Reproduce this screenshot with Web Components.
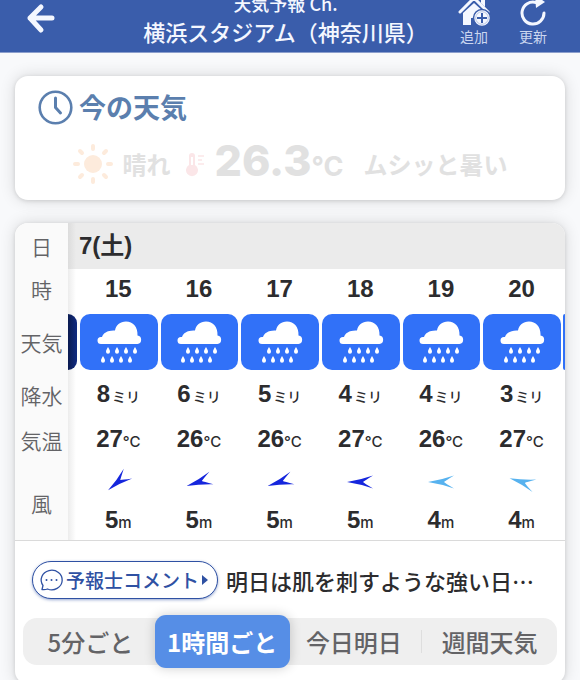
<!DOCTYPE html>
<html lang="ja">
<head>
<meta charset="utf-8">
<meta name="viewport" content="width=device-width, initial-scale=1">
<title>天気予報 Ch.</title>
<style>
    html {
        scrollbar-width: none;
    }

    body {
        margin: 0;
        background: #f8f9fb;
        color: #2c2c2e;
        font-family: "Noto Sans CJK JP", sans-serif;
        --number-font: "Liberation Sans", "Noto Sans CJK JP", sans-serif;
        --brand: #3a5dab;
    }

    main {
        display: flex;
        flex-direction: column;
        gap: 23px;
        padding: 23px 15px 16px;
    }
</style>
</head>
<body>
<app-header></app-header>
<main>
    <weather-card><now-weather></now-weather></weather-card>
    <weather-card>
        <hourly-forecast></hourly-forecast>
        <forecaster-comment>明日は肌を刺すような強い日…</forecaster-comment>
        <period-tabs></period-tabs>
    </weather-card>
</main>

<script>
const HOURS = [
    { hour: 15, rain: 8, temp: 27, wind: 5, angle: -40 },
    { hour: 16, rain: 6, temp: 26, wind: 5, angle: -18 },
    { hour: 17, rain: 5, temp: 26, wind: 5, angle: -18 },
    { hour: 18, rain: 4, temp: 27, wind: 5, angle: 0 },
    { hour: 19, rain: 4, temp: 26, wind: 4, angle: 0 },
    { hour: 20, rain: 3, temp: 27, wind: 4, angle: 17 }
];

class AppHeader extends HTMLElement {
    connectedCallback() {
        this.attachShadow({ mode: 'open' });
        this.shadowRoot.innerHTML = `
            <style>
                :host {
                    display: block;
                    background: var(--brand);
                    color: #f4f7ff;
                    border-bottom: 1px solid #8c9fcd;
                }

                header {
                    display: grid;
                    grid-template-columns: 1fr auto 1fr;
                    align-content: end;
                    align-items: end;
                    height: 52px;
                    padding: 0 25px 0 16px;
                    overflow: hidden;
                }

                button {
                    display: flex;
                    flex-direction: column;
                    align-items: center;
                    border: 0;
                    padding: 0;
                    background: none;
                    color: inherit;
                    font: inherit;
                    cursor: pointer;
                }

                .back {
                    justify-self: start;
                    padding: 0 8px 17px;
                }

                h1 {
                    margin: 0;
                    padding-bottom: 7px;
                    font-size: 22px;
                    font-weight: 500;
                    line-height: 28px;
                    text-align: center;
                    white-space: nowrap;
                }

                h1 small {
                    display: block;
                    font-size: 18px;
                }

                nav {
                    display: flex;
                    justify-content: flex-end;
                    gap: 15px;
                    padding-bottom: 7px;
                }

                nav button {
                    width: 44px;
                    gap: 1px;
                }

                nav span {
                    color: #cbd6f0;
                    font-size: 14px;
                    line-height: 18px;
                }

                svg {
                    display: block;
                }
            </style>
            <header>
                <button class="back" aria-label="戻る">
                    <svg width="32" height="32" viewBox="0 0 32 32" fill="none" stroke="currentColor" stroke-width="5" stroke-linecap="round" stroke-linejoin="round">
                        <path d="M28 15H6M17 4 6 15l11 12"/>
                    </svg>
                </button>
                <h1><small>天気予報 Ch.</small>横浜スタジアム（神奈川県）</h1>
                <nav>
                    <button>
                        <svg width="34" height="34" viewBox="0 0 34 34">
                            <path d="M24 6h4v9l-4-4z" fill="currentColor"/>
                            <path d="M3 20 17 6l14 14" fill="none" stroke="currentColor" stroke-width="3" stroke-linecap="round"/>
                            <path d="M17 11 6 21v12h8v-7h6v7h8V21z" fill="currentColor"/>
                            <circle cx="25" cy="26" r="8.500" fill="currentColor" stroke="#3a5dab" stroke-width="1.500"/>
                            <circle cx="25" cy="26" r="6.300" fill="none" stroke="#8ea2d0" stroke-width=".6"/>
                            <path d="M25 21v10M20 26h10" stroke="#3a5dab" stroke-width="2"/>
                        </svg>
                        <span>追加</span>
                    </button>
                    <button>
                        <svg width="34" height="34" viewBox="0 0 34 34">
                            <path d="M28 21a11 11 0 1 1-8-10.500" fill="none" stroke="currentColor" stroke-width="3" stroke-linecap="round"/>
                            <path d="M19 3l10 7-9 6z" fill="currentColor"/>
                        </svg>
                        <span>更新</span>
                    </button>
                </nav>
            </header>
        `;
    }
}

class WeatherCard extends HTMLElement {
    connectedCallback() {
        this.attachShadow({ mode: 'open' });
        this.shadowRoot.innerHTML = `
            <style>
                :host {
                    display: block;
                    background: #fff;
                    border-radius: 13px;
                    box-shadow: 0 0 16px rgba(0, 0, 0, 0.14), 0 1px 4px rgba(0, 0, 0, 0.12);
                }
            </style>
            <slot></slot>
        `;
    }
}

class NowWeather extends HTMLElement {
    connectedCallback() {
        this.attachShadow({ mode: 'open' });
        this.shadowRoot.innerHTML = `
            <style>
                :host {
                    display: block;
                    padding: 12px 23px 5px;
                }

                h2 {
                    display: flex;
                    align-items: center;
                    gap: 6px;
                    margin: 0;
                    color: #5b7fae;
                    font-size: 27px;
                    font-weight: 700;
                    line-height: 38px;
                }

                .current {
                    display: flex;
                    align-items: center;
                    justify-content: center;
                    margin: 6px 0 0;
                    color: #e1e1e1;
                    font-size: 24px;
                    font-weight: 700;
                    line-height: 57px;
                    white-space: nowrap;
                }

                .sky {
                    margin: 0 14px 0 8px;
                }

                .temp {
                    margin: 0 20px 0 8px;
                    font-family: Inter, "Liberation Sans", sans-serif;
                    font-size: 43px;
                    font-weight: 800;
                }

                .temp small {
                    font-size: 27px;
                    font-weight: 700;
                }
            </style>
            <h2>
                <svg width="35" height="35" viewBox="0 0 35 35" fill="none" stroke="currentColor" stroke-linecap="round">
                    <circle cx="17.500" cy="17.500" r="15.800" stroke-width="2.600"/>
                    <path d="M17.500 8v9.500l5 5.500" stroke-width="3" stroke-linejoin="round"/>
                </svg>
                今の天気
            </h2>
            <p class="current">
                <svg width="42" height="42" viewBox="-21 -21 42 42" fill="#fdebdc" stroke="#fdebdc" stroke-width="4" stroke-linecap="round">
                    <circle r="9" stroke="none"/>
                    <path d="M0-18v3M0 18v-3M-18 0h3M18 0h-3M-13-13l2 2M13 13l-2-2M13-13l-2 2M-13 13l2-2"/>
                </svg>
                <span class="sky">晴れ</span>
                <svg width="22" height="26" viewBox="0 0 22 26">
                    <path d="M5 14V5a3 3 0 0 1 6 0v9a6 6 0 1 1-6 0z" fill="#fbe6e8"/>
                    <path d="M8 6v8" stroke="#fff" stroke-width="2"/>
                    <path d="M14 5h6M14 9h4M14 13h6" stroke="#fbe6e8" stroke-width="1.500"/>
                </svg>
                <span class="temp">26.3<small>°C</small></span>
                <span>ムシッと暑い</span>
            </p>
        `;
    }
}

class RainTile extends HTMLElement {
    connectedCallback() {
        const drop = (x, y) => `<path d="M${x} ${y}c1 2 2 3 2 4.700a2 2 0 0 1-4 0c0-1.700 1-2.700 2-4.700z"/>`;
        const drops = [
            ...[12, 21, 30, 39].map(x => drop(x, 26)),
            ...[7, 16, 25, 34].map(x => drop(x, 35))
        ].join('');

        this.attachShadow({ mode: 'open' });
        this.shadowRoot.innerHTML = `
            <style>
                :host {
                    display: flex;
                    align-items: center;
                    justify-content: center;
                    height: 56px;
                    border-radius: 10px;
                    background: #3171f8;
                }
            </style>
            <svg width="46" height="42" viewBox="0 0 46 42" fill="#fff" role="img" aria-label="雨">
                <path d="M5 23a3.500 3.500 0 0 1 0-7h1c1-4 6-7 13-6.500C20 4 24 .5 30 .5c7 0 12 5.500 11.500 14a4.300 4.300 0 0 1 0 8.500z"/>
                ${drops}
            </svg>
        `;
    }
}

class WindArrow extends HTMLElement {
    connectedCallback() {
        const angle = this.getAttribute('angle');
        this.attachShadow({ mode: 'open' });
        this.shadowRoot.innerHTML = `
            <style>
                :host {
                    display: flex;
                    justify-content: center;
                }
            </style>
            <svg width="30" height="30" viewBox="-15 -15 30 30" fill="currentColor">
                <path d="M-13 0Q0-2 13-6.500Q4-1 3 0Q4 1 13 6.500Q0 2-13 0z" transform="rotate(${angle})"/>
            </svg>
        `;
    }
}

class HourlyForecast extends HTMLElement {
    connectedCallback() {
        this.attachShadow({ mode: 'open' });
        this.shadowRoot.innerHTML = `
            <style>
                :host {
                    display: block;
                    overflow: hidden;
                    border-radius: 13px 13px 0 0;
                    border-bottom: 1px solid #dadada;
                }

                table {
                    width: 100%;
                    table-layout: fixed;
                    border-collapse: collapse;
                    font-family: var(--number-font);
                    font-size: 24px;
                    font-weight: 700;
                    line-height: 28px;
                    text-align: center;
                    white-space: nowrap;
                }

                col.label { width: 53px; }
                col.before { width: 10px; }
                col.after { width: 3px; }

                th, td {
                    padding: 0;
                }

                tbody th {
                    background: #fafafa;
                    color: #636366;
                    font-family: "Noto Sans CJK JP", sans-serif;
                    font-size: 21px;
                    font-weight: 350;
                }

                td.shade {
                    background: linear-gradient(90deg, #ececec, #fff 8px);
                }

                .date { height: 46px; }
                .hour { height: 40px; }
                .sky { height: 66px; }
                .rain { height: 40px; }
                .temp { height: 50px; }
                .arrow { height: 34px; }
                .wind { height: 41px; }

                .date td {
                    padding-left: 11px;
                    background: linear-gradient(90deg, #dcdcdc, #ebebeb 8px);
                    text-align: left;
                }

                .sky td { padding: 0 1px 0 2px; }
                .sky td.shade { padding: 0 1px 0 0; }
                .sky td.next { padding: 0 0 0 1px; }

                .shade rain-tile {
                    border-radius: 0 10px 10px 0;
                    background: linear-gradient(90deg, #0b1b50, #10297c 8px);
                }

                .next rain-tile {
                    border-radius: 2px 0 0 2px;
                }

                small {
                    font-family: Inter, "Noto Sans CJK JP", sans-serif;
                    font-size: 15px;
                    font-weight: 500;
                }

                .rain small {
                    margin-left: 2px;
                    font-size: 14px;
                }

                .wind td { padding-top: 4px; }

                .strong { color: #1526dd; }
                .light { color: #57b2ef; }
            </style>
            <table>
                <colgroup>
                    <col class="label"><col class="before"><col span="${HOURS.length}"><col class="after">
                </colgroup>
                <tbody>
                    <tr class="date"><th scope="row">日</th><td colspan="${HOURS.length + 2}">7(土)</td></tr>
                    ${this.row('hour', '時', h => h.hour)}
                    <tr class="sky">
                        <th scope="row">天気</th>
                        <td class="shade"><rain-tile class="edge"></rain-tile></td>
                        ${HOURS.map(() => '<td><rain-tile></rain-tile></td>').join('')}
                        <td class="next"><rain-tile class="edge"></rain-tile></td>
                    </tr>
                    ${this.row('rain', '降水', h => `${h.rain}<small>ミリ</small>`)}
                    ${this.row('temp', '気温', h => `${h.temp}<small>°C</small>`)}
                    ${this.row('arrow', '風', h => `<wind-arrow class="${h.wind > 4 ? 'strong' : 'light'}" angle="${h.angle}"></wind-arrow>`, 2)}
                    ${this.row('wind', '', h => `${h.wind}<small>m</small>`)}
                </tbody>
            </table>
        `;
        // only a sliver of the neighbouring hours is visible, without their icon
        this.shadowRoot.querySelectorAll('.edge').forEach(tile => {
            tile.shadowRoot.querySelector('svg').remove();
        });
    }

    row(name, label, cell, span = 1) {
        const head = label ? `<th scope="row" rowspan="${span}">${label}</th>` : '';
        const cells = HOURS.map(h => `<td>${cell(h)}</td>`).join('');
        return `<tr class="${name}">${head}<td class="shade"></td>${cells}<td></td></tr>`;
    }
}

class ForecasterComment extends HTMLElement {
    connectedCallback() {
        this.attachShadow({ mode: 'open' });
        this.shadowRoot.innerHTML = `
            <style>
                :host {
                    display: flex;
                    align-items: center;
                    gap: 8px;
                    padding: 20px 17px 16px;
                    white-space: nowrap;
                }

                button {
                    display: flex;
                    align-items: center;
                    flex: none;
                    gap: 2px;
                    border: 1px solid #2f51a3;
                    border-radius: 19px;
                    padding: 0 8px 0 6px;
                    background: #fff;
                    box-shadow: 0 1px 3px rgba(47, 81, 163, 0.5);
                    color: #2f51a3;
                    font: 500 19px/36px "Noto Sans CJK JP", sans-serif;
                    cursor: pointer;
                }

                p {
                    overflow: hidden;
                    margin: 0;
                    font-size: 22px;
                    font-weight: 500;
                    line-height: 32px;
                    text-overflow: ellipsis;
                }
            </style>
            <button>
                <svg width="25" height="24" viewBox="0 0 25 24" fill="none" stroke="currentColor" stroke-width="1.300">
                    <path d="M3 21.500 4 17.500A10.500 9.800 0 1 1 8.500 21Q6 22 3 21.500z" stroke-linejoin="round"/>
                    <path d="M7.500 12h.01M12.500 12h.01M17.500 12h.01" stroke-width="2" stroke-linecap="round"/>
                </svg>
                予報士コメント
                <svg width="8" height="10" viewBox="0 0 8 10" fill="currentColor"><path d="M1 0v10l6-5z"/></svg>
            </button>
            <p><slot></slot></p>
        `;
    }
}

class PeriodTabs extends HTMLElement {
    connectedCallback() {
        this.attachShadow({ mode: 'open' });
        this.shadowRoot.innerHTML = `
            <style>
                :host {
                    display: block;
                    padding: 0 8px 16px;
                }

                div {
                    display: flex;
                    align-items: center;
                }

                button {
                    flex: 1;
                    border: 0;
                    padding: 0;
                    background: #efefef;
                    color: #636366;
                    font: 500 24px/47px "Noto Sans CJK JP", sans-serif;
                    white-space: nowrap;
                    cursor: pointer;
                }

                button:first-child { border-radius: 14px 0 0 14px; }
                button:last-child { border-radius: 0 14px 14px 0; }

                button.active {
                    z-index: 1;
                    margin: 0 -3px;
                    border-radius: 11px;
                    background: #568ee6;
                    box-shadow: 0 0 12px rgba(0, 0, 0, 0.2);
                    color: #fff;
                    font-weight: 700;
                    line-height: 53px;
                }

                hr {
                    width: 1px;
                    height: 23px;
                    margin: 0;
                    border: 0;
                    background: #dedede;
                    box-shadow: 0 -12px #efefef, 0 12px #efefef;
                }
            </style>
            <div role="tablist">
                <button role="tab">5分ごと</button>
                <button role="tab" class="active" aria-selected="true">1時間ごと</button>
                <button role="tab">今日明日</button>
                <hr>
                <button role="tab">週間天気</button>
            </div>
        `;

        const tabs = this.shadowRoot.querySelectorAll('button');
        tabs.forEach(tab => {
            tab.addEventListener('click', () => {
                tabs.forEach(t => {
                    t.classList.toggle('active', t === tab);
                    t.setAttribute('aria-selected', t === tab);
                });
            });
        });
    }
}

customElements.define('rain-tile', RainTile);
customElements.define('wind-arrow', WindArrow);
customElements.define('app-header', AppHeader);
customElements.define('weather-card', WeatherCard);
customElements.define('now-weather', NowWeather);
customElements.define('hourly-forecast', HourlyForecast);
customElements.define('forecaster-comment', ForecasterComment);
customElements.define('period-tabs', PeriodTabs);
</script>
</body>
</html>
